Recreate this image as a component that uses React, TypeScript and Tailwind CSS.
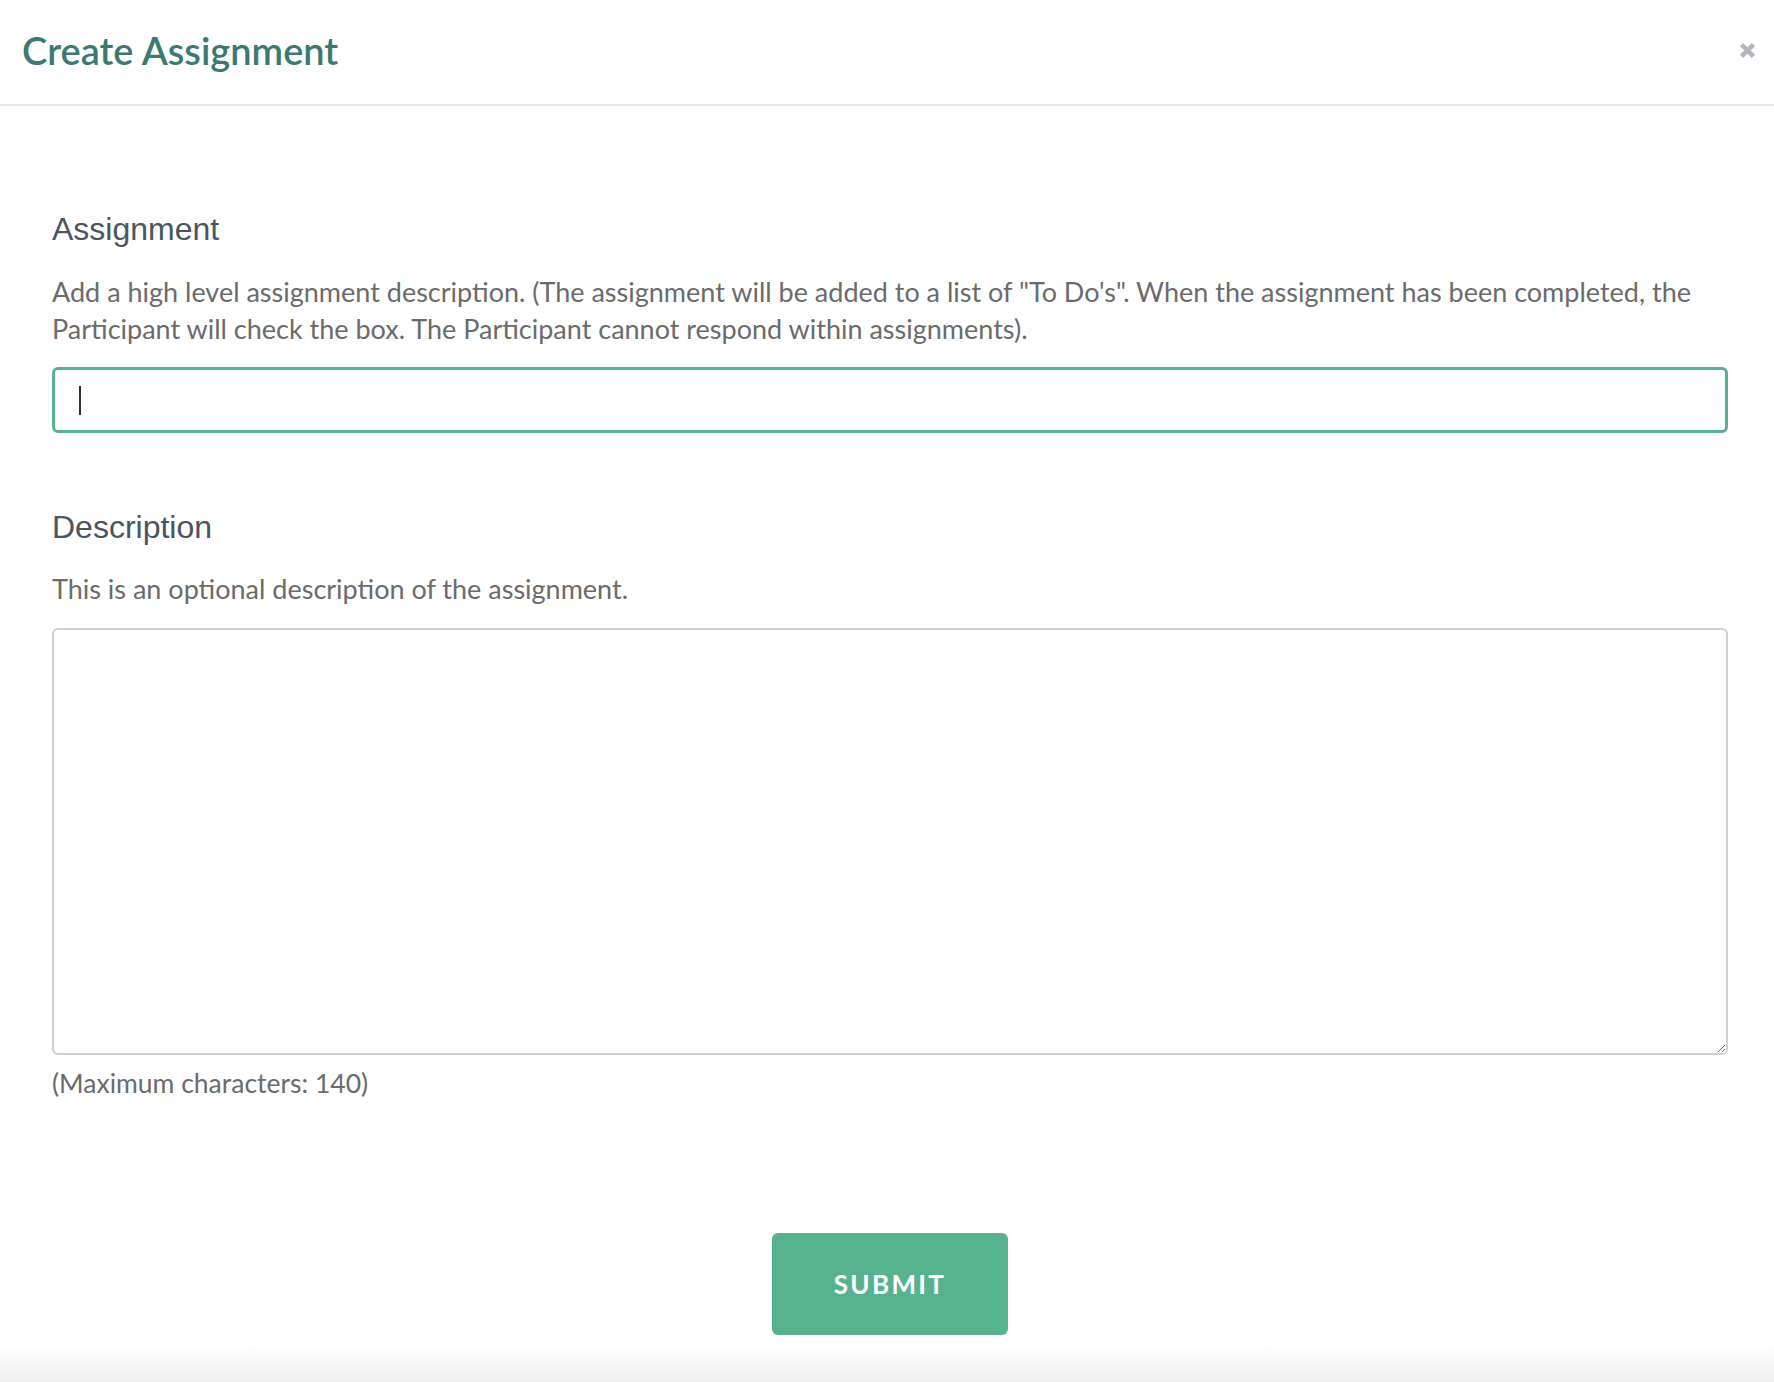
import React from 'react';

const bodyFont = { fontFamily: 'Lato, "Open Sans", sans-serif' };

export default function App() {
  return (
    <div className="relative min-h-[1382px] w-full bg-white flex flex-col">
      <header className="h-[106px] flex items-center justify-between pl-[22px] pr-[17px] pb-[4px] border-b-2 border-[#e6e6e6]">
        <h1
          className="text-[38px] leading-none font-semibold text-[#3b7a72]"
          style={bodyFont}
        >
          Create Assignment
        </h1>
        <button className="w-[20px] h-[20px] flex items-center justify-center text-[#b3b6bb]" aria-label="Close">
          <svg viewBox="0 0 16 16" className="w-[19px] h-[19px]">
            <path d="M3 3 L13 13 M13 3 L3 13" stroke="currentColor" strokeWidth="3.8" strokeLinecap="butt" />
          </svg>
        </button>
      </header>

      <main className="flex flex-col pl-[52px] pr-[46px] pt-[104px]">
        <label className="text-[32px] leading-[38px] text-[#4b5462] font-['Liberation_Sans',Arial,sans-serif]">
          Assignment
        </label>
        <p className="mt-[25px] text-[27px] leading-[37px] text-[#6b6b6b]" style={bodyFont}>
          Add a high level assignment description. (The assignment will be added to a list of "To Do's". When the assignment has been completed, the Participant will check the box. The Participant cannot respond within assignments).
        </p>
        <div className="relative mt-[20px]">
          <input
            type="text"
            className="w-full h-[66px] rounded-[6px] border-[3px] border-[#57b48e] px-[25px] text-[27px] outline-none caret-transparent"
            style={bodyFont}
          />
          <span className="absolute left-[27px] top-[19px] w-[2px] h-[29px] bg-[#333]" />
        </div>

        <label className="mt-[75px] text-[32px] leading-[38px] text-[#4b5462] font-['Liberation_Sans',Arial,sans-serif]">
          Description
        </label>
        <p className="mt-[24px] text-[27px] leading-[37px] text-[#6b6b6b]" style={bodyFont}>
          This is an optional description of the assignment.
        </p>
        <textarea
          className="mt-[21px] w-full h-[427px] rounded-[6px] border-2 border-[#d0d0d0] p-[20px] text-[27px] outline-none resize-y"
          style={bodyFont}
        />
        <p className="mt-[10px] text-[26.5px] leading-[37px] text-[#6b6b6b]" style={bodyFont}>
          (Maximum characters: 140)
        </p>

        <div className="flex justify-center mt-[131px]">
          <button
            className="w-[236px] h-[102px] rounded-[6px] bg-[#57b38e] text-white text-[26px] font-bold tracking-[0.09em]"
            style={bodyFont}
          >
            SUBMIT
          </button>
        </div>
      </main>

      <div className="mt-auto h-[36px] bg-gradient-to-b from-white to-[#efefef]" />
    </div>
  );
}
